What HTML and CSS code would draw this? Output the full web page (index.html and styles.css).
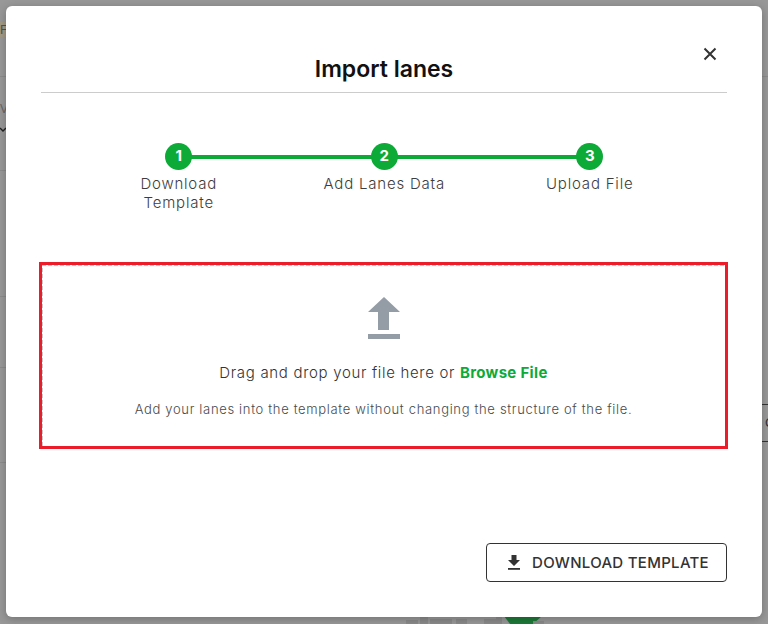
FILE: index.html
```html
<!DOCTYPE html>
<html lang="en">
<head>
<meta charset="utf-8">
<title>Import lanes</title>
<link rel="stylesheet" href="styles.css">
</head>
<body>
<div class="backdrop" aria-hidden="true">
  <span class="bg-tag">F</span>
  <span class="bg-line l1"></span>
  <span class="bg-line l2"></span>
  <span class="bg-line l3"></span>
  <span class="bg-line l4"></span>
  <span class="bg-line l5"></span>
  <span class="bg-line l6"></span>
  <span class="bg-v">V</span>
  <svg class="bg-chev" width="6" height="6" viewBox="0 0 6 6"><path d="M0 1l3 3 3-3" fill="none" stroke="#222" stroke-width="1.4"/></svg>
  <span class="bg-btn"></span>
  <span class="bg-c">C</span>
  <svg class="bg-bottom" width="140" height="8" viewBox="0 0 140 8"><path d="M0 4h12v4H0zM14 1h8v7h-8zM24 3h22v5H24zM50 3h11v5H50zM78 3h12v5H78zM90 1h6v7h-6z" fill="#8a8a8a"/><path d="M104 8l-6-8h38l-9 8z" fill="#1d7a38"/><path d="M127 5h11v3h-11z" fill="#8a8a8a"/></svg>
</div>

<main class="modal">
  <header class="modal-head">
    <h1 class="title">Import lanes</h1>
    <button class="close" type="button" aria-label="Close">
      <svg width="14" height="14" viewBox="0 0 14 14"><path d="M1.5 1.5l11 11M12.5 1.5l-11 11" fill="none" stroke="#333" stroke-width="2"/></svg>
    </button>
  </header>

  <ol class="stepper">
    <li class="step"><span class="dot">1</span><span class="label">Download<br>Template</span></li>
    <li class="step"><span class="dot">2</span><span class="label">Add Lanes Data</span></li>
    <li class="step"><span class="dot">3</span><span class="label">Upload File</span></li>
  </ol>

  <section class="highlight">
    <div class="drop">
      <svg class="upload" width="32" height="42" viewBox="0 0 32 42"><path d="M16 0L32 15H21V33H10V15H0Z" fill="#949ca5"/><rect y="37" width="32" height="5" fill="#949ca5"/></svg>
      <p class="drop-main">Drag and drop your file here or <a class="browse" href="#">Browse File</a></p>
      <p class="drop-sub">Add your lanes into the template without changing the structure of the file.</p>
    </div>
  </section>

  <footer class="actions">
    <button class="download" type="button">
      <svg width="14" height="15" viewBox="0 0 14 15"><path d="M4.500 0h5v5H13L7 11 1 5h3.500z" fill="#333"/><rect x="1" y="13" width="12" height="1.800" fill="#333"/></svg>
      DOWNLOAD TEMPLATE
    </button>
  </footer>
</main>
</body>
</html>
```
FILE: styles.css
```css
* { box-sizing: border-box; }
html, body { margin: 0; height: 100%; }
body {
  width: 768px;
  height: 624px;
  overflow: hidden;
  background: #989898;
  font-family: "Inter", "Liberation Sans", sans-serif;
  padding: 6px;
  position: relative;
}
.backdrop { position: absolute; inset: 0; overflow: hidden; color: #444; }
.bg-tag { position: absolute; left: 0; top: 22px; width: 6px; height: 15px; background: #a39a86; font: 13px/15px "Liberation Sans", sans-serif; overflow: hidden; color: #5c5240; }
.bg-line { position: absolute; height: 1px; background: #8b8b8b; }
.l1 { left: 0; width: 6px; top: 76px; }
.l2 { left: 0; width: 6px; top: 170px; }
.l3 { left: 0; width: 6px; top: 296px; }
.l4 { left: 0; width: 6px; top: 367px; }
.l5 { left: 0; width: 6px; top: 462px; }
.l6 { left: 762px; width: 6px; top: 76px; }
.bg-v { position: absolute; left: 0; top: 102px; width: 6px; overflow: hidden; font: 12px/14px "Liberation Sans", sans-serif; color: #666; }
.bg-chev { position: absolute; left: 0; top: 127px; }
.bg-btn { position: absolute; left: 762px; top: 404px; width: 10px; height: 38px; border-top: 1px solid #333; border-bottom: 1px solid #333; }
.bg-c { position: absolute; left: 765px; top: 416px; font: 13px/14px "Liberation Sans", sans-serif; color: #333; }
.bg-bottom { position: absolute; left: 406px; top: 616px; }

.modal {
  position: relative;
  width: 756px;
  height: 611px;
  background: #fff;
  border-radius: 6px;
  box-shadow: 0 2px 8px rgba(0, 0, 0, .25);
  padding: 0 35px;
  display: flex;
  flex-direction: column;
}
.modal-head {
  height: 87px;
  border-bottom: 1px solid #ccc;
  display: flex;
  align-items: flex-end;
  justify-content: center;
}
.title {
  margin: 0 0 8px;
  font-size: 23px;
  line-height: 30px;
  font-weight: 600;
  color: #111;
  letter-spacing: 0;
}
.close {
  position: absolute;
  right: 45px;
  top: 41px;
  padding: 0;
  width: 14px;
  height: 14px;
  border: 0;
  background: none;
  display: flex;
}
.stepper {
  list-style: none;
  margin: 50px 0 0;
  padding: 0 35px;
  display: grid;
  grid-template-columns: repeat(3, 205.500px);
  height: 107px;
}
.step {
  position: relative;
  display: flex;
  flex-direction: column;
  align-items: center;
}
.step + .step::before {
  content: "";
  position: absolute;
  left: -50%;
  width: 100%;
  top: 12px;
  height: 4px;
  background: #0daa38;
}
.dot {
  position: relative;
  z-index: 1;
  width: 27px;
  height: 27px;
  border-radius: 50%;
  background: #0daa38;
  color: #fff;
  font-size: 15px;
  font-weight: 700;
  line-height: 26px;
  text-align: center;
}
.label {
  margin-top: 4px;
  font-size: 15px;
  font-weight: 300;
  line-height: 19px;
  color: #3d3d3d;
  text-align: center;
  letter-spacing: .8px;
}
.highlight {
  margin: 12px -2px 0 -2px;
  width: 689px;
  height: 187px;
  border: 3px solid #ec1c2b;
}
.drop {
  height: 100%;
  background:
    repeating-linear-gradient(90deg, #c8c8c8 0 4px, transparent 4px 6px) top left / 100% 1px no-repeat,
    repeating-linear-gradient(0deg, #c8c8c8 0 4px, transparent 4px 6px) top left / 1px 100% no-repeat;
  display: flex;
  flex-direction: column;
  align-items: center;
  padding-top: 32px;
}
.upload { display: block; }
.drop-main {
  margin: 24px 0 0;
  font-size: 15px;
  font-weight: 300;
  line-height: 20px;
  color: #333;
  letter-spacing: .68px;
}
.browse { color: #0daa38; font-weight: 700; text-decoration: none; letter-spacing: .32px; }
.drop-sub {
  margin: 17px 0 0;
  font-size: 13px;
  font-weight: 300;
  line-height: 18px;
  color: #4a4a4a;
  letter-spacing: .67px;
}
.actions {
  margin-top: 94px;
  display: flex;
  justify-content: flex-end;
}
.download {
  width: 241px;
  height: 39px;
  border: 1px solid #333;
  border-radius: 4px;
  background: #fff;
  color: #333;
  font-family: inherit;
  font-size: 15px;
  font-weight: 500;
  letter-spacing: .3px;
  display: flex;
  align-items: center;
  gap: 11px;
  padding: 0 0 0 20px;
  white-space: nowrap;
}
```
